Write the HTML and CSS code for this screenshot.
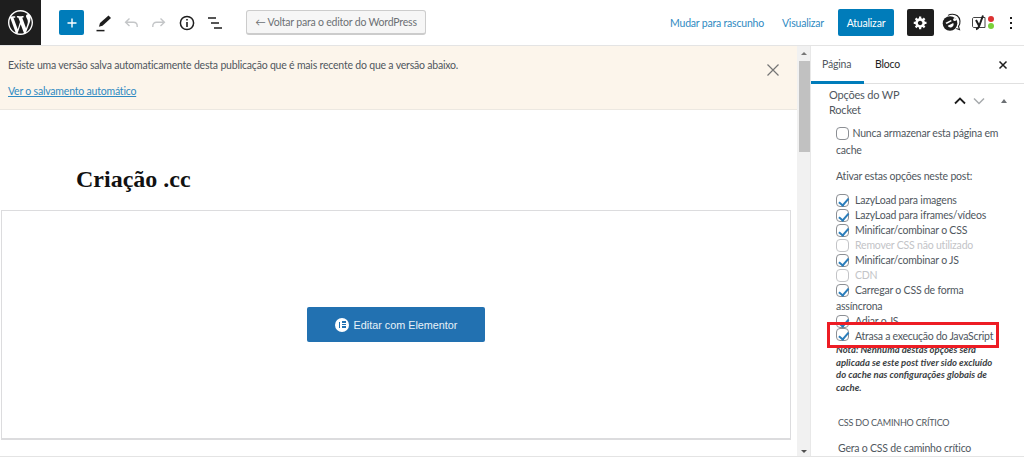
FILE: index.html
```html
<!DOCTYPE html>
<html lang="pt-BR">
<head>
<meta charset="UTF-8">
<title>Editar página</title>
<link rel="stylesheet" href="styles.css">
</head>
<body>
<div class="topbar">
  <div class="wp-logo">
    <svg width="25" height="25" viewBox="0 0 20 20"><path fill="#fff" d="M20 10c0-5.51-4.49-10-10-10C4.48 0 0 4.49 0 10c0 5.52 4.48 10 10 10 5.51 0 10-4.48 10-10zM7.78 15.37L4.37 6.22c.55-.02 1.17-.08 1.17-.08.5-.06.44-1.13-.06-1.11 0 0-1.45.11-2.37.11-.18 0-.37 0-.58-.01C4.12 2.69 6.87 1.11 10 1.11c2.33 0 4.45.87 6.05 2.34-.68-.11-1.65.39-1.65 1.58 0 .74.45 1.36.9 2.1.35.61.55 1.36.55 2.46 0 1.49-1.4 5-1.4 5l-3.03-8.37c.54-.02.82-.17.82-.17.5-.05.44-1.25-.06-1.22 0 0-1.44.12-2.38.12-.87 0-2.33-.12-2.33-.12-.5-.03-.56 1.2-.06 1.22l.92.08 1.26 3.41zM17.41 10c.24-.64.74-1.87.43-4.25.7 1.29 1.05 2.71 1.05 4.25 0 3.29-1.73 6.24-4.4 7.78.97-2.59 1.94-5.2 2.92-7.78zM6.1 18.09C3.12 16.65 1.11 13.53 1.11 10c0-1.3.23-2.48.72-3.59C3.25 10.3 4.67 14.2 6.1 18.09zm4.03-6.63l2.58 6.98c-.86.29-1.76.45-2.71.45-.79 0-1.57-.11-2.29-.33.81-2.38 1.62-4.74 2.42-7.1z"/></svg>
  </div>
  <div class="tools">
    <div class="add-btn">
      <svg width="14" height="14" viewBox="0 0 14 14"><path stroke="#fff" stroke-width="1.4" d="M7 2.500v9M2.500 7h9"/></svg>
    </div>
    <svg class="tool" width="20" height="20" viewBox="0 0 20 20"><path fill="#1e1e1e" d="M15.5 2.500 18 5l-8.500 7.700-3.600 1 1.100-3.600z"/><path stroke="#1e1e1e" stroke-width="1.500" d="M3.500 17.600h8"/></svg>
    <svg class="tool" width="20" height="20" viewBox="0 0 20 20"><path fill="none" stroke="#c4c6c8" stroke-width="1.400" d="M8.500 5.500 4.600 9.200l3.900 3.700M5 9.200h7.500c2.200 0 3.700 1.400 3.700 3.800v1"/></svg>
    <svg class="tool" width="20" height="20" viewBox="0 0 20 20"><path fill="none" stroke="#c4c6c8" stroke-width="1.400" d="M11.500 5.500l3.900 3.700-3.900 3.700M15 9.200H7.500c-2.200 0-3.700 1.400-3.700 3.800v1"/></svg>
    <svg class="tool" width="20" height="20" viewBox="0 0 20 20"><circle cx="10" cy="10" r="6.600" fill="none" stroke="#1e1e1e" stroke-width="1.500"/><path stroke="#1e1e1e" stroke-width="1.600" d="M10 9v5M10 6v1.600"/></svg>
    <svg class="tool" width="20" height="20" viewBox="0 0 20 20"><path stroke="#1e1e1e" stroke-width="1.500" d="M3 5h8M6 10h8M9 15h8"/></svg>
    <a class="back-btn">← Voltar para o editor do WordPress</a>
  </div>
  <div class="actions">
    <a class="link">Mudar para rascunho</a>
    <a class="link">Visualizar</a>
    <a class="update-btn">Atualizar</a>
    <div class="settings-btn">
      <svg width="15" height="15" viewBox="0 0 20 20"><path fill="#fff" fill-rule="evenodd" d="M18 12h-2.180c-.170.700-.440 1.350-.810 1.930l1.540 1.540-2.100 2.100-1.540-1.540c-.580.360-1.230.630-1.910.790V19H8v-2.180c-.680-.160-1.330-.430-1.910-.790l-1.540 1.540-2.120-2.120 1.540-1.540c-.360-.580-.630-1.230-.790-1.910H1V9.030h2.170c.160-.700.440-1.350.800-1.940L2.430 5.550l2.100-2.100 1.540 1.540c.580-.370 1.240-.640 1.930-.810V2h3v2.180c.680.160 1.330.430 1.910.790l1.540-1.540 2.120 2.120-1.540 1.540c.360.590.640 1.240.800 1.940H18V12zm-8.500 1.500c1.660 0 3-1.340 3-3s-1.340-3-3-3-3 1.340-3 3 1.340 3 3 3z"/></svg>
    </div>
    <svg class="rocket" width="20" height="20" viewBox="0 0 20 20"><path fill="none" stroke="#1e1e1e" stroke-width="1.100" d="M6 2.400C8.500.8 12.800.8 15.300 2.800c3.300 2.600 3.400 7.600 1.200 10.600l1 3.300-3.200-1.200"/><circle cx="8" cy="10.500" r="7.300" fill="#1e1e1e"/><path fill="#fff" d="M3.500 9.800 9 7l.7 1.300-5.100 2.800zM5.800 12.800l5.500-2.700c.9 2-.2 3.800-2.200 4.300-1.500.3-2.700-.3-3.300-1.600z"/><circle cx="12.700" cy="6.500" r="1.500" fill="#fff"/></svg>
    <div class="yoast">
      <svg width="17" height="17" viewBox="0 0 17 17"><path fill="#fff" stroke="#444" stroke-width="1" d="M3 3.500h11v10H3c-1 0-1.500-.6-1.500-1.500V5c0-.9.500-1.500 1.500-1.500z"/><path fill="none" stroke="#1e1e1e" stroke-width="2" d="M5 6l3.200 6M12 1.500 8.200 12c-.5 1.500-1.400 2.800-3.200 3.200"/></svg>
      <span class="dots"><i class="dot red"></i><i class="dot green"></i></span>
    </div>
    <svg class="more" width="4" height="14" viewBox="0 0 4 14"><path fill="#1e1e1e" d="M1 1h2v2H1zM1 6h2v2H1zM1 11h2v2H1z"/></svg>
  </div>
</div>

<div class="main">
  <div class="content">
    <div class="notice">
      <div class="notice-text">
        <p>Existe uma versão salva automaticamente desta publicação que é mais recente do que a versão abaixo.</p>
        <a>Ver o salvamento automático</a>
      </div>
      <svg class="notice-close" width="14" height="14" viewBox="0 0 14 14"><path stroke="#757575" stroke-width="1.200" d="M1.500 1.500l11 11M12.500 1.500l-11 11"/></svg>
    </div>
    <h1 class="post-title">Criação .cc</h1>
    <div class="elementor-box">
      <a class="elementor-btn">
        <span class="eicon"><i></i><i></i><i></i><b></b></span>
        Editar com Elementor
      </a>
    </div>
  </div>

  <div class="scrollbar">
    <span class="arrow up"></span>
    <span class="thumb"></span>
    <span class="arrow down"></span>
  </div>

  <div class="sidebar">
    <div class="tabs">
      <a class="tab active">Página</a>
      <a class="tab">Bloco</a>
      <svg class="tabs-close" width="10" height="10" viewBox="0 0 10 10"><path stroke="#1e1e1e" stroke-width="1.500" d="M1.500 1.500l7 7M8.500 1.500l-7 7"/></svg>
    </div>
    <div class="panel">
      <div class="panel-head">
        <h2>Opções do WP Rocket</h2>
        <svg class="chev" width="12" height="8" viewBox="0 0 12 8"><path fill="none" stroke="#1e1e1e" stroke-width="1.800" d="M1 6.500l5-5 5 5"/></svg>
        <svg class="chev" width="12" height="8" viewBox="0 0 12 8"><path fill="none" stroke="#a7aaad" stroke-width="1.500" d="M1 1.500l5 5 5-5"/></svg>
        <span class="caret"></span>
      </div>
      <div class="panel-body">
        <label class="never"><span class="box"></span> Nunca armazenar esta página em cache</label>
        <p class="activate">Ativar estas opções neste post:</p>
        <div class="opt"><span class="box on"></span>LazyLoad para imagens</div>
        <div class="opt"><span class="box on"></span>LazyLoad para iframes/vídeos</div>
        <div class="opt"><span class="box on"></span>Minificar/combinar o CSS</div>
        <div class="opt off"><span class="box"></span>Remover CSS não utilizado</div>
        <div class="opt"><span class="box on"></span>Minificar/combinar o JS</div>
        <div class="opt off"><span class="box"></span>CDN</div>
        <div class="opt wrap"><span class="box on"></span>Carregar o CSS de forma assíncrona</div>
        <div class="opt"><span class="box on"></span>Adiar o JS</div>
        <div class="opt marked"><span class="box on"></span>Atrasa a execução do JavaScript</div>
        <p class="note">Nota: Nenhuma destas opções será aplicada se este post tiver sido excluído do cache nas configurações globais de cache.</p>
        <h3>CSS DO CAMINHO CRÍTICO</h3>
        <p class="critical">Gera o CSS de caminho crítico</p>
      </div>
    </div>
  </div>
</div>
</body>
</html>
```
FILE: styles.css
```css
* {
    box-sizing: border-box;
}

html, body {
    height: 100%;
}

body {
    margin: 0;
    font-family: Lato, "Open Sans", sans-serif;
    font-size: 10.5px;
    letter-spacing: -0.2px;
    color: #50575e;
    background-color: #fff;
    overflow: hidden;
    display: flex;
    flex-direction: column;
}

p, h1, h2, h3 {
    margin: 0;
    font-weight: normal;
}

/* top bar */
.topbar {
    display: flex;
    align-items: center;
    height: 46px;
    flex-shrink: 0;
    border-bottom: 1px solid #e4e4e4;
}

.wp-logo {
    width: 41px;
    height: 45px;
    background-color: #1e1e1e;
    display: flex;
    align-items: center;
    justify-content: center;
}

.tools {
    display: flex;
    align-items: center;
    margin-left: 18px;
    flex: 1;
}

.add-btn {
    width: 25px;
    height: 25px;
    background-color: #007cba;
    border-radius: 2px;
    display: flex;
    align-items: center;
    justify-content: center;
    margin-right: 9px;
}

.tool {
    margin-right: 8px;
    flex-shrink: 0;
}

.back-btn {
    margin-left: 13px;
    width: 180px;
    height: 25px;
    background-color: #f6f6f6;
    border: 1px solid #ccc;
    border-bottom-width: 2px;
    border-radius: 3px;
    display: flex;
    align-items: center;
    justify-content: center;
    color: #6c7074;
    white-space: nowrap;
}

.actions {
    display: flex;
    align-items: center;
}

.link {
    color: #2f8ac2;
    margin-right: 18px;
}

.link + .link {
    margin-right: 14px;
}

.update-btn {
    width: 56px;
    height: 27px;
    background-color: #007cba;
    color: #fff;
    border-radius: 2px;
    display: flex;
    align-items: center;
    justify-content: center;
    margin-right: 13px;
}

.settings-btn {
    width: 27px;
    height: 27px;
    background-color: #1e1e1e;
    border-radius: 2px;
    display: flex;
    align-items: center;
    justify-content: center;
    margin-right: 8px;
}

.rocket {
    margin-right: 9px;
}

.yoast {
    display: flex;
    align-items: center;
    width: 23px;
    margin-right: 15px;
}

.dots {
    display: flex;
    flex-direction: column;
    gap: 1px;
}

.dot {
    display: block;
    width: 6px;
    height: 6px;
    border-radius: 50%;
}

.red {
    background-color: #dc3232;
}

.green {
    background-color: #7ad03a;
}

.more {
    margin-right: 11px;
}

/* main area */
.main {
    display: flex;
    flex: 1;
    min-height: 0;
    border-bottom: 1px solid #e4e4e4;
}

.content {
    width: 797px;
    flex-shrink: 0;
}

.notice {
    display: flex;
    justify-content: space-between;
    height: 64px;
    background-color: #fcf5eb;
    border-bottom: 1px solid #ece8e1;
    padding: 12px 17px 0 8px;
}

.notice-text p {
    margin-bottom: 12px;
    line-height: 14px;
}

.notice-text a {
    color: #2f8ac2;
    text-decoration: underline;
    line-height: 14px;
}

.notice-close {
    margin-top: 5px;
}

.post-title {
    font-family: "Liberation Serif", serif;
    font-size: 24px;
    font-weight: bold;
    letter-spacing: 0;
    color: #111;
    margin-left: 76px;
    line-height: 28px;
    padding-top: 55px;
    height: 100px;
}

.elementor-box {
    margin-left: 1px;
    width: 790px;
    height: 230px;
    border: 1px solid #dcdcde;
    border-bottom-width: 2px;
    display: flex;
    justify-content: center;
    padding-top: 96px;
}

.elementor-btn {
    width: 178px;
    height: 35px;
    background-color: #2271b1;
    border-radius: 2px;
    color: #e8f1f8;
    font-family: "Liberation Sans", sans-serif;
    font-size: 10.800px;
    letter-spacing: 0;
    display: flex;
    align-items: center;
    justify-content: center;
    gap: 5px;
}

.eicon {
    position: relative;
    width: 14px;
    height: 14px;
    border-radius: 50%;
    background-color: #fff;
    display: flex;
    flex-direction: column;
    justify-content: center;
    align-items: flex-end;
    gap: 1px;
    padding-right: 3px;
}

.eicon i {
    display: block;
    width: 4px;
    height: 1.500px;
    background-color: #2271b1;
}

.eicon b {
    position: absolute;
    left: 4px;
    top: 4px;
    width: 1.500px;
    height: 6.500px;
    background-color: #2271b1;
}

/* scrollbar */
.scrollbar {
    width: 13px;
    flex-shrink: 0;
    background-color: #f1f1f1;
    display: flex;
    flex-direction: column;
    align-items: center;
    padding: 6px 0 3px 1px;
}

.thumb {
    width: 11px;
    height: 91px;
    background-color: #c1c1c1;
    margin: 6px 0 auto;
}

.arrow {
    width: 0;
    height: 0;
    border-left: 3px solid transparent;
    border-right: 3px solid transparent;
}

.arrow.up {
    border-bottom: 3px solid #777;
}

.arrow.down {
    border-top: 3px solid #505050;
}

/* sidebar */
.sidebar {
    flex: 1;
    min-width: 0;
    overflow: hidden;
    position: relative;
    border-left: 1px solid #e8e8e8;
}

.tabs {
    display: flex;
    align-items: center;
    height: 38px;
    border-bottom: 1px solid #e0e0e0;
}

.tab {
    height: 38px;
    line-height: 36px;
    padding: 0 11px 0 11px;
    color: #1e1e1e;
}

.tab.active {
    width: 53px;
    color: #50575e;
    border-bottom: 3px solid #007cba;
}

.tabs-close {
    margin-left: auto;
    margin-right: 16px;
}

.panel {
    padding: 2px 0 0;
}

.panel-head {
    display: flex;
    align-items: flex-start;
    padding-left: 18px;
}

.panel-head h2 {
    width: 125px;
    padding: 1px 40px 0 0;
    font-size: 11px;
    line-height: 15px;
    color: #50575e;
}

.chev {
    margin-right: 7px;
    margin-top: 11px;
}

.caret {
    width: 0;
    height: 0;
    margin: 13px 0 0 9px;
    border-left: 3.500px solid transparent;
    border-right: 3.500px solid transparent;
    border-bottom: 4px solid #6c7074;
}

.panel-body {
    padding: 8px 22px 0 25px;
}

.box {
    display: inline-block;
    width: 13px;
    height: 13px;
    margin: 0 6px -2px 0;
    border: 1px solid #8c8f94;
    border-radius: 4px;
    background-color: #fff;
    vertical-align: -1px;
    position: relative;
}

.box.on::after {
    content: "";
    position: absolute;
    left: 3.500px;
    top: 0.500px;
    width: 3.500px;
    height: 7.500px;
    border: solid #2a7dbb;
    border-width: 0 2px 2px 0;
    transform: rotate(40deg);
}

.never {
    display: block;
    line-height: 17px;
}

.never .box {
    margin-right: 1px;
}

.activate {
    margin: 9px 0 9px;
    line-height: 16px;
}

.opt {
    line-height: 15px;
    white-space: nowrap;
}

.opt.wrap {
    line-height: 15.500px;
    white-space: normal;
}

.opt.off {
    color: #c3c4c7;
}

.opt.off .box {
    border-color: #c3c4c7;
}

/* red highlight drawn over the screenshot */
.marked {
    position: relative;
    margin-top: -1px;
    background-color: #fff;
    line-height: 16px;
    letter-spacing: -0.26px;
    z-index: 1;
}

.marked .box {
    vertical-align: 1px;
}

.marked::after {
    content: "";
    position: absolute;
    left: -9px;
    width: 166px;
    top: -6px;
    bottom: -4px;
    border: 3px solid #ed1c24;
}

.note {
    font-size: 9.500px;
    font-weight: bold;
    font-style: italic;
    line-height: 12.500px;
    letter-spacing: 0;
    color: #3c3f44;
}

.panel-body h3 {
    font-size: 9px;
    margin: 22px 0 0 2px;
    line-height: 14px;
}

.critical {
    margin: 11px 0 0 2px;
    line-height: 14px;
}
```
